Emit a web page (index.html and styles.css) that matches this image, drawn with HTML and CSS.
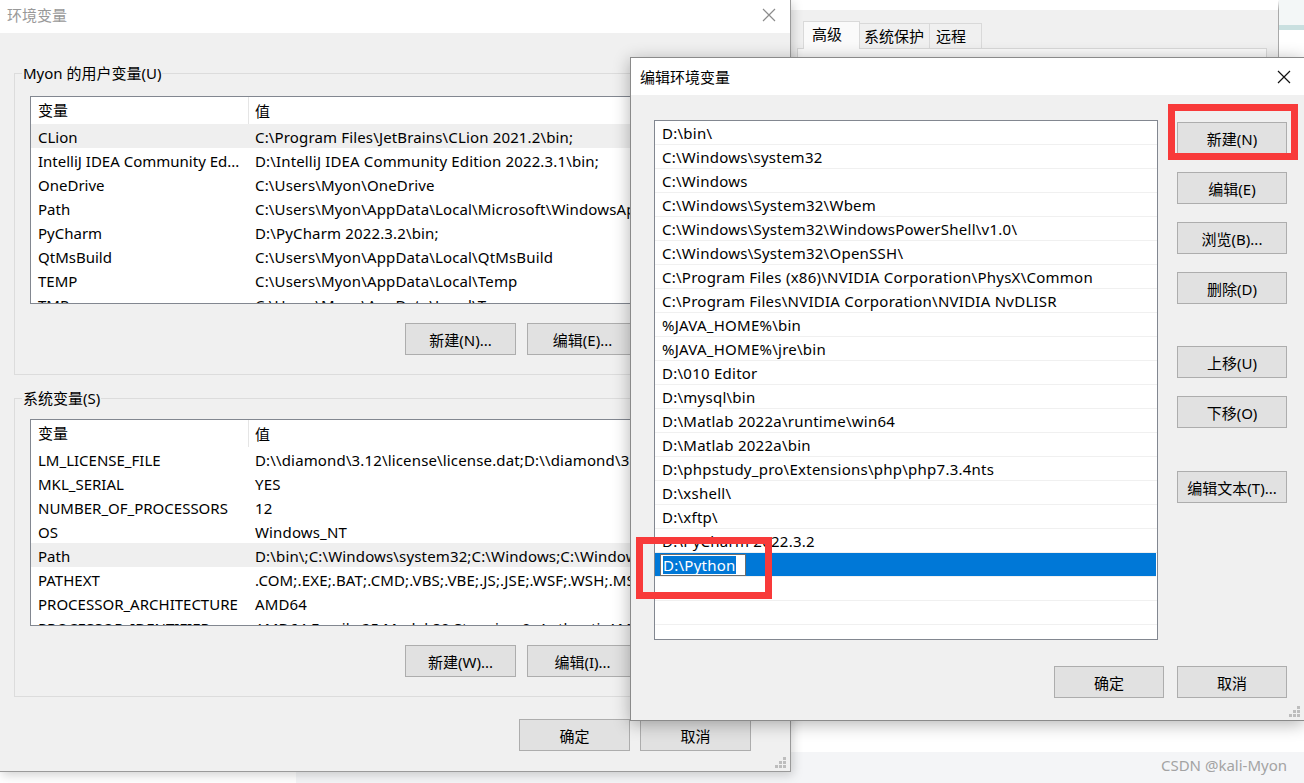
FILE: index.html
```html
<!DOCTYPE html>
<html>
  <head>
    <meta charset="utf-8">
    <title>编辑环境变量</title>
    <link rel="stylesheet" href="styles.css">
  </head>
  <body>
    <div class="desk">
      <div class="floor"></div>
      <div class="side"></div>

      <!-- 系统属性（后面的窗口） -->
      <div class="sysprop">
        <div class="tabs">
          <span class="tab on">高级</span>
          <span class="tab t2">系统保护</span>
          <span class="tab t3">远程</span>
        </div>
        <div class="tabpanel"></div>
      </div>

      <!-- 环境变量 -->
      <div class="win envwin">
        <div class="titlebar">
          <span class="title">环境变量</span>
          <svg class="close" width="14" height="14" viewBox="0 0 14 14"><path d="M1 1L13 13M13 1L1 13" stroke="#8c8c8c" stroke-width="1.2" fill="none"/></svg>
        </div>
        <div class="body">
          <div class="group">
            <span class="group-title">Myon 的用户变量(U)</span>
            <div class="list">
              <div class="head"><span class="c1">变量</span><span class="c2">值</span></div>
              <div class="row hover"><span class="c1">CLion</span><span class="c2">C:\Program Files\JetBrains\CLion 2021.2\bin;</span></div>
              <div class="row"><span class="c1">IntelliJ IDEA Community Ed...</span><span class="c2">D:\IntelliJ IDEA Community Edition 2022.3.1\bin;</span></div>
              <div class="row"><span class="c1">OneDrive</span><span class="c2">C:\Users\Myon\OneDrive</span></div>
              <div class="row"><span class="c1">Path</span><span class="c2">C:\Users\Myon\AppData\Local\Microsoft\WindowsApps;</span></div>
              <div class="row"><span class="c1">PyCharm</span><span class="c2">D:\PyCharm 2022.3.2\bin;</span></div>
              <div class="row"><span class="c1">QtMsBuild</span><span class="c2">C:\Users\Myon\AppData\Local\QtMsBuild</span></div>
              <div class="row"><span class="c1">TEMP</span><span class="c2">C:\Users\Myon\AppData\Local\Temp</span></div>
              <div class="row"><span class="c1">TMP</span><span class="c2">C:\Users\Myon\AppData\Local\Temp</span></div>
            </div>
            <div class="btns">
              <button class="btn">新建(N)...</button>
              <button class="btn">编辑(E)...</button>
              <button class="btn">删除(D)</button>
            </div>
          </div>

          <div class="group sys">
            <span class="group-title">系统变量(S)</span>
            <div class="list">
              <div class="head"><span class="c1">变量</span><span class="c2">值</span></div>
              <div class="row"><span class="c1">LM_LICENSE_FILE</span><span class="c2">D:\\diamond\3.12\license\license.dat;D:\\diamond\3.12\license\license.dat</span></div>
              <div class="row"><span class="c1">MKL_SERIAL</span><span class="c2">YES</span></div>
              <div class="row"><span class="c1">NUMBER_OF_PROCESSORS</span><span class="c2">12</span></div>
              <div class="row"><span class="c1">OS</span><span class="c2">Windows_NT</span></div>
              <div class="row hover"><span class="c1">Path</span><span class="c2">D:\bin\;C:\Windows\system32;C:\Windows;C:\Windows\System32\Wbem;</span></div>
              <div class="row"><span class="c1">PATHEXT</span><span class="c2">.COM;.EXE;.BAT;.CMD;.VBS;.VBE;.JS;.JSE;.WSF;.WSH;.MSC</span></div>
              <div class="row"><span class="c1">PROCESSOR_ARCHITECTURE</span><span class="c2">AMD64</span></div>
              <div class="row"><span class="c1">PROCESSOR_IDENTIFIER</span><span class="c2">AMD64 Family 25 Model 80 Stepping 0, AuthenticAMD</span></div>
            </div>
            <div class="btns">
              <button class="btn">新建(W)...</button>
              <button class="btn">编辑(I)...</button>
              <button class="btn">删除(L)</button>
            </div>
          </div>

          <div class="foot">
            <button class="btn">确定</button>
            <button class="btn">取消</button>
          </div>
        </div>
        <svg class="grip" width="11" height="11" viewBox="0 0 11 11" fill="#bdbdbd"><rect x="8" y="0" width="3" height="3"/><rect x="4" y="4" width="3" height="3"/><rect x="8" y="4" width="3" height="3"/><rect x="0" y="8" width="3" height="3"/><rect x="4" y="8" width="3" height="3"/><rect x="8" y="8" width="3" height="3"/></svg>
      </div>

      <!-- 编辑环境变量 -->
      <div class="win editwin">
        <div class="titlebar etitle">
          <span class="title">编辑环境变量</span>
          <svg class="close" width="14" height="14" viewBox="0 0 14 14"><path d="M1 1L13 13M13 1L1 13" stroke="#111" stroke-width="1.2" fill="none"/></svg>
        </div>
        <div class="ebody">
          <div class="emain">
            <div class="elist">
              <div class="erow">D:\bin\</div>
              <div class="erow">C:\Windows\system32</div>
              <div class="erow">C:\Windows</div>
              <div class="erow">C:\Windows\System32\Wbem</div>
              <div class="erow">C:\Windows\System32\WindowsPowerShell\v1.0\</div>
              <div class="erow">C:\Windows\System32\OpenSSH\</div>
              <div class="erow">C:\Program Files (x86)\NVIDIA Corporation\PhysX\Common</div>
              <div class="erow">C:\Program Files\NVIDIA Corporation\NVIDIA NvDLISR</div>
              <div class="erow">%JAVA_HOME%\bin</div>
              <div class="erow">%JAVA_HOME%\jre\bin</div>
              <div class="erow">D:\010 Editor</div>
              <div class="erow">D:\mysql\bin</div>
              <div class="erow">D:\Matlab 2022a\runtime\win64</div>
              <div class="erow">D:\Matlab 2022a\bin</div>
              <div class="erow">D:\phpstudy_pro\Extensions\php\php7.3.4nts</div>
              <div class="erow">D:\xshell\</div>
              <div class="erow">D:\xftp\</div>
              <div class="erow">D:\PyCharm 2022.3.2</div>
              <div class="erow sel"><div class="edit"><span>D:\Python</span></div></div>
              <div class="erow"></div>
              <div class="erow"></div>
              <div class="erow"></div>
            </div>
            <div class="ecol">
              <button class="btn">新建(N)</button>
              <button class="btn">编辑(E)</button>
              <button class="btn">浏览(B)...</button>
              <button class="btn">删除(D)</button>
              <button class="btn up">上移(U)</button>
              <button class="btn">下移(O)</button>
              <button class="btn txt">编辑文本(T)...</button>
            </div>
          </div>
          <div class="efoot">
            <button class="btn">确定</button>
            <button class="btn">取消</button>
          </div>
        </div>
        <svg class="grip" width="11" height="11" viewBox="0 0 11 11" fill="#bdbdbd"><rect x="8" y="0" width="3" height="3"/><rect x="4" y="4" width="3" height="3"/><rect x="8" y="4" width="3" height="3"/><rect x="0" y="8" width="3" height="3"/><rect x="4" y="8" width="3" height="3"/><rect x="8" y="8" width="3" height="3"/></svg>

        <!-- 红框标注 -->
        <div class="redbox r1"></div>
        <div class="redbox r2"></div>
      </div>

      <div class="mark">CSDN @kali-Myon</div>
    </div>
  </body>
</html>
```

FILE: styles.css
```css
*{
  margin: 0;
  padding: 0;
  box-sizing: border-box;
}
body{
  width: 1304px;
  height: 783px;
  overflow: hidden;
  font-family: "Noto Sans", "Noto Sans CJK SC", sans-serif;
  font-size: 15px;
  color: #000;
}
.desk{
  position: relative;
  width: 1304px;
  height: 783px;
  background: #fff;
  overflow: hidden;
}
.floor{
  position: absolute;
  left: 296px;
  top: 752px;
  right: 0;
  bottom: 0;
  background: #f4f5f7;
}
.side{
  position: absolute;
  left: 1279px;
  top: 0;
  width: 25px;
  height: 30px;
  background: #f3f7f7;
  border-bottom: 5px solid #c9e0e0;
}

/* 系统属性 */
.sysprop{
  position: absolute;
  left: 790px;
  top: 0;
  width: 489px;
  height: 712px;
  background: #f0f0f0;
  border-top: 10px solid #fff;
  border-right: 1px solid #a9a9a9;
}
.tabs{
  display: flex;
  align-items: flex-end;
  margin: 10px 0 0 13px;
  height: 28px;
}
.tab{
  height: 25px;
  line-height: 24px;
  border: 1px solid #d9d9d9;
  border-bottom: none;
  background: #f0f0f0;
}
.tab.on{
  width: 57px;
  height: 28px;
  padding-left: 8px;
  background: #fafafa;
  margin-bottom: -1px;
  position: relative;
}
.tab.t2{
  width: 70px;
  padding-left: 4px;
  border-left: none;
}
.tab.t3{
  width: 52px;
  padding-left: 6px;
  border-left: none;
}
.tabpanel{
  margin-left: 7px;
  width: 470px;
  height: 640px;
  border: 1px solid #d9d9d9;
  background: #fafafa;
}

/* 窗口 */
.win{
  position: absolute;
  background: #f0f0f0;
}
.envwin{
  left: 0;
  top: 0;
  width: 791px;
  height: 772px;
  border-right: 1px solid #9a9a9a;
  border-bottom: 1px solid #9a9a9a;
  box-shadow: 2px 3px 10px rgba(0,0,0,0.18);
}
.titlebar{
  height: 33px;
  background: #fff;
  display: flex;
  align-items: center;
  justify-content: space-between;
  padding: 0 14px 4px 7px;
}
.envwin .title{
  color: #999;
}
.body{
  padding: 40px 14px 0;
}
.group{
  border: 1px solid #dcdcdc;
  padding: 0 15px 19px;
}
.group-title{
  display: block;
  width: max-content;
  margin: -11px 0 0 -8px;
  padding: 0 1px;
  line-height: 20px;
  background: #f0f0f0;
}
.list{
  margin-top: 13px;
  height: 208px;
  background: #fff;
  border: 1px solid #828790;
  overflow: hidden;
}
.group.sys{
  margin-top: 23px;
}
.group.sys .list{
  margin-top: 11px;
  height: 207px;
}
.head, .row{
  display: flex;
  align-items: center;
  white-space: nowrap;
}
.head{
  height: 27px;
}
.row{
  height: 24px;
  padding-top: 1px;
}
.row.hover{
  background: #efefef;
}
.c1{
  flex: none;
  width: 218px;
  padding-left: 7px;
  overflow: hidden;
}
.head .c1{
  height: 100%;
  line-height: 27px;
  box-shadow: inset -1px 0 #e5e5e5;
}
.c2{
  padding-left: 6px;
  letter-spacing: 0.15px;
}
.btn{
  width: 111px;
  height: 32px;
  background: #e1e1e1;
  border: 1px solid #adadad;
  font: inherit;
  color: #000;
  display: flex;
  align-items: center;
  justify-content: center;
}
.btns{
  display: flex;
  justify-content: flex-end;
  gap: 11px;
  margin-top: 19px;
}
.foot{
  display: flex;
  justify-content: flex-end;
  gap: 10px;
  margin-top: 22px;
  padding-right: 25px;
}
.grip{
  position: absolute;
  right: 4px;
  bottom: 3px;
}

/* 编辑环境变量 */
.editwin{
  left: 630px;
  top: 57px;
  width: 674px;
  height: 664px;
  border: 1px solid #8a8a8a;
  border-right: none;
  box-shadow: 0 3px 16px rgba(0,0,0,0.3);
}
.etitle{
  height: 37px;
  padding: 0 13px 0 9px;
}
.ebody{
  padding: 25px 0 0 23px;
}
.emain{
  display: flex;
  gap: 19px;
}
.elist{
  width: 504px;
  height: 520px;
  background: #fff;
  border: 1px solid #828790;
  overflow: hidden;
}
.erow{
  height: 24px;
  border-bottom: 1px solid #f0f0f0;
  padding: 1px 0 0 7px;
  display: flex;
  align-items: center;
  white-space: nowrap;
  letter-spacing: 0.25px;
}
.erow.sel{
  background: #0078d7;
  margin-right: 1px;
  padding-top: 0;
}
.edit{
  margin-left: -2px;
  width: 86px;
  height: 22px;
  background: #fff;
  border: 1px solid #6e6e6e;
  padding-left: 2px;
  display: flex;
  align-items: center;
}
.edit span{
  background: #0078d7;
  color: #fff;
  line-height: 18px;
}
.ecol{
  display: flex;
  flex-direction: column;
  padding-top: 2px;
  gap: 18px;
}
.ecol .btn{
  width: 110px;
}
.ecol .up{
  margin-top: 24px;
}
.ecol .txt{
  margin-top: 25px;
}
.efoot{
  display: flex;
  justify-content: flex-end;
  gap: 13px;
  margin-top: 26px;
  padding-right: 17px;
}
.efoot .btn{
  width: 110px;
}
.redbox{
  position: absolute;
  border: 7px solid #f83a3a;
}
.r1{
  left: 537px;
  top: 46px;
  width: 130px;
  height: 56px;
}
.r2{
  left: 5px;
  top: 479px;
  width: 136px;
  height: 62px;
}
.mark{
  position: absolute;
  right: 17px;
  top: 755px;
  color: #a3a3a3;
  font-size: 15px;
}
```
